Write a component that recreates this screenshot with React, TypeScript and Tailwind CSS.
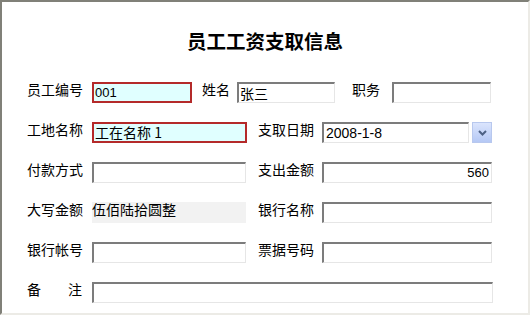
import React from "react";

const font = { fontFamily: '"Noto Sans CJK SC", "Noto Sans", sans-serif' };

function Label({ text, w = "w-[56px]", cls = "" }: { text: string; w?: string; cls?: string }) {
  return (
    <div className={`${w} ${cls} -mt-[3px] shrink-0 text-[14px] leading-[21px] text-black whitespace-nowrap`}>{text}</div>
  );
}

function Inset({ w, cls = "", children, right = false }: { w: string; cls?: string; children?: React.ReactNode; right?: boolean }) {
  return (
    <div
      className={`${w} ${cls} h-[21px] shrink-0 bg-white border-t-2 border-l-2 border-r border-b border-t-[#7c7c7c] border-l-[#7c7c7c] border-r-[#e6e6e6] border-b-[#e6e6e6] flex items-center overflow-hidden ${right ? "justify-end pr-[2px]" : "pl-[1px]"}`}
    >
      {children}
    </div>
  );
}

function RedBox({ w, cls = "", children }: { w: string; cls?: string; children?: React.ReactNode }) {
  return (
    <div className={`${w} ${cls} h-[21px] shrink-0 bg-[#e0ffff] border-2 border-[#b42a2a] flex items-center pl-[1px] overflow-hidden`}>
      {children}
    </div>
  );
}

export default function App() {
  const num = { fontFamily: '"Liberation Sans", Arial, sans-serif' };
  return (
    <div
      className="w-[530px] h-[315px] bg-white border-t-2 border-l-2 border-r-2 border-b-2 border-t-[#808078] border-l-[#808078] border-r-[#ecebe6] border-b-[#ecebe6] pl-[25px] pt-[25px]"
      style={font}
    >
      <div className="w-[526px] -ml-[25px] text-center text-[19.5px] font-bold leading-[28px] text-black">员工工资支取信息</div>

      <div className="mt-[27px] flex flex-col gap-[19px]">
        {/* row 1 */}
        <div className="flex items-start h-[21px]">
          <Label text="员工编号" />
          <RedBox w="w-[100px]" cls="ml-[9px]">
            <span className="text-[13px] text-black" style={num}>001</span>
          </RedBox>
          <Label text="姓名" w="w-[28px]" cls="ml-[10px]" />
          <Inset w="w-[98px]" cls="ml-[7px]">
            <span className="text-[14px] leading-[17px] text-black">张三</span>
          </Inset>
          <Label text="职务" w="w-[28px]" cls="ml-[17px]" />
          <Inset w="w-[99px]" cls="ml-[12px]" />
        </div>

        {/* row 2 */}
        <div className="flex items-start h-[21px]">
          <Label text="工地名称" />
          <RedBox w="w-[155px]" cls="ml-[9px]">
            <span className="text-[14px] leading-[17px] text-black">工在名称 1</span>
          </RedBox>
          <Label text="支取日期" cls="ml-[11px]" />
          <Inset w="w-[147px]" cls="ml-[8px]">
            <span className="text-[14px] pl-[1px] text-black" style={num}>2008-1-8</span>
          </Inset>
          <div className="ml-[3px] w-[20px] h-[21px] shrink-0 border border-[#b8c8ee] bg-gradient-to-b from-[#dbe5fd] to-[#b5c8f5] flex items-center justify-center">
            <svg width="9" height="6" viewBox="0 0 9 6">
              <path d="M1 1 L4.5 4.5 L8 1" fill="none" stroke="#4d6185" strokeWidth="2" />
            </svg>
          </div>
        </div>

        {/* row 3 */}
        <div className="flex items-start h-[21px]">
          <Label text="付款方式" />
          <Inset w="w-[154px]" cls="ml-[9px]" />
          <Label text="支出金额" cls="ml-[12px]" />
          <Inset w="w-[170px]" cls="ml-[8px]" right>
            <span className="text-[13px] text-black" style={num}>560</span>
          </Inset>
        </div>

        {/* row 4 */}
        <div className="flex items-start h-[21px]">
          <Label text="大写金额" />
          <div className="ml-[9px] w-[154px] h-[21px] shrink-0 bg-[#f2f2f2] flex items-start">
            <span className="text-[14px] leading-[17px] text-black -mt-[1px]">伍佰陆拾圆整</span>
          </div>
          <Label text="银行名称" cls="ml-[12px]" />
          <Inset w="w-[170px]" cls="ml-[8px]" />
        </div>

        {/* row 5 */}
        <div className="flex items-start h-[21px]">
          <Label text="银行帐号" />
          <Inset w="w-[154px]" cls="ml-[9px]" />
          <Label text="票据号码" cls="ml-[12px]" />
          <Inset w="w-[170px]" cls="ml-[8px]" />
        </div>

        {/* row 6 */}
        <div className="flex items-start h-[21px]">
          <div className="w-[56px] -mt-[3px] shrink-0 flex justify-between text-[14px] leading-[21px] text-black pr-[1px]">
            <span>备</span>
            <span>注</span>
          </div>
          <Inset w="w-[401px]" cls="ml-[9px]" />
        </div>
      </div>
    </div>
  );
}
